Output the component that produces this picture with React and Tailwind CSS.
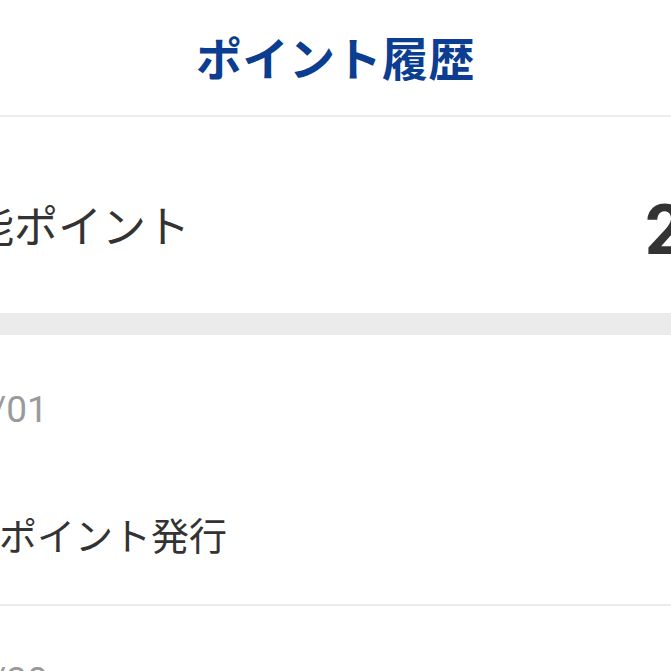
import React from "react";

const jp = { fontFamily: '"Noto Sans CJK JP", "Noto Sans", sans-serif' };
const num = { fontFamily: 'Roboto, "Noto Sans CJK JP", sans-serif' };

const history = [
  { date: "2024/05/01", title: "ボーナスポイント発行" },
  { date: "2024/04/30", title: "ポイント利用" },
];

export default function App() {
  return (
    <div className="w-[671px] h-[671px] overflow-hidden bg-white" style={jp}>
      {/* header */}
      <header className="h-[117px] flex items-center justify-center border-b-2 border-[#ececec]">
        <h1 className="text-[46px] font-bold text-[#0b3d91] tracking-[0.5px] pb-[2px]">
          ポイント履歴
        </h1>
      </header>

      {/* balance */}
      <div className="h-[196px] flex items-center">
        <div className="-ml-[162px] flex-1 text-[44px] text-[#333333] whitespace-nowrap pt-[18px]">
          利用可能ポイント
        </div>
        <div
          className="shrink-0 w-[26px] whitespace-nowrap text-[70px] font-bold text-[#333333] leading-none pt-[30px]"
          style={num}
        >
          2,000pt
        </div>
      </div>

      <div className="h-[22px] bg-[#ebebeb]" />

      {/* list */}
      {history.map((item) => (
        <div key={item.date} className="h-[271px] border-b-2 border-[#ececec] flex flex-col -ml-[149px]">
          <div className="pt-[47px] text-[37px] text-[#9a9a9a] whitespace-nowrap" style={num}>
            {item.date}
          </div>
          <div className="pt-[67px] -ml-[4px] text-[38px] text-[#333333] whitespace-nowrap">
            {item.title}
          </div>
        </div>
      ))}
    </div>
  );
}
